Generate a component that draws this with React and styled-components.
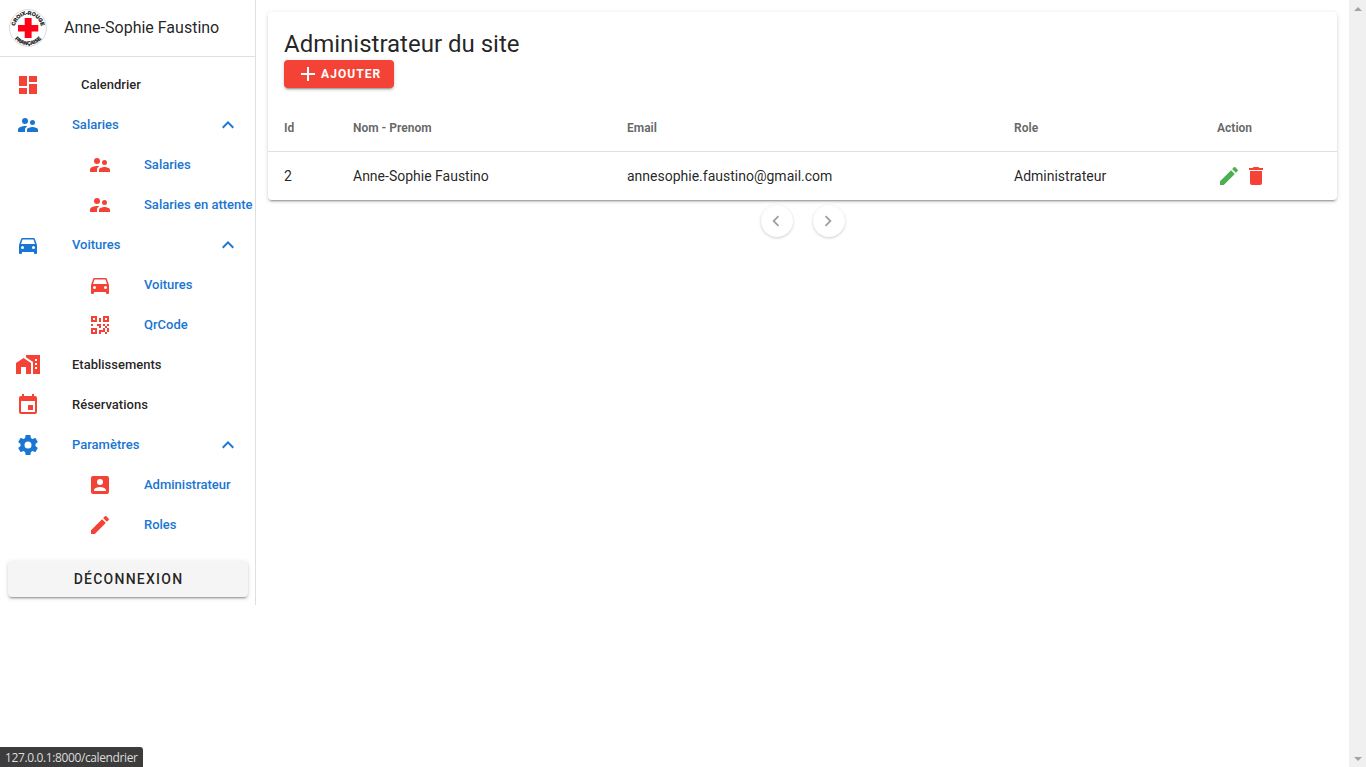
import React from 'react';
import styled, { createGlobalStyle } from 'styled-components';

const RED = '#f44336';
const BLUE = '#1976d2';
const GREEN = '#4caf50';

const icons = {
  dashboard: 'M13,3V9H21V3M13,21H21V11H13M3,21H11V15H3M3,13H11V3H3V13Z',
  people:
    'M16.5,12A2.5,2.5 0 0,0 19,9.5A2.5,2.5 0 0,0 16.5,7A2.5,2.5 0 0,0 14,9.5A2.5,2.5 0 0,0 16.5,12M9,11A3,3 0 0,0 12,8A3,3 0 0,0 9,5A3,3 0 0,0 6,8A3,3 0 0,0 9,11M16.5,14C14.67,14 11,14.92 11,16.75V19H22V16.75C22,14.92 18.33,14 16.5,14M9,13C6.67,13 2,14.17 2,16.5V19H9V16.75C9,15.9 9.33,14.41 11.37,13.28C10.5,13.1 9.66,13 9,13Z',
  car: 'M5,11L6.5,6.5H17.5L19,11M17.5,16A1.5,1.5 0 0,1 16,14.5A1.5,1.5 0 0,1 17.5,13A1.5,1.5 0 0,1 19,14.5A1.5,1.5 0 0,1 17.5,16M6.5,16A1.5,1.5 0 0,1 5,14.5A1.5,1.5 0 0,1 6.5,13A1.5,1.5 0 0,1 8,14.5A1.5,1.5 0 0,1 6.5,16M18.92,6C18.72,5.42 18.16,5 17.5,5H6.5C5.84,5 5.28,5.42 5.08,6L3,12V20A1,1 0 0,0 4,21H5A1,1 0 0,0 6,20V19H18V20A1,1 0 0,0 19,21H20A1,1 0 0,0 21,20V12L18.92,6Z',
  qrcode:
    'M3,11H5V13H3V11M11,5H13V9H11V5M9,11H13V15H11V13H9V11M15,11H17V13H19V11H21V13H19V15H21V19H19V21H17V19H13V21H11V17H15V15H17V13H15V11M19,19V15H17V19H19M15,3H21V9H15V3M17,5V7H19V5H17M3,3H9V9H3V3M5,5V7H7V5H5M3,15H9V21H3V15M5,17V19H7V17H5Z',
  homeCity:
    'M0,21V10L7.5,5L15,10V21H10V14H5V21H0M24,2V21H17V8.93L10,4.27V2H24M21,14H19V16H21V14M21,10H19V12H21V10M21,6H19V8H21V6Z',
  calendar:
    'M19,19H5V8H19M16,1V3H8V1H6V3H5C3.89,3 3,3.89 3,5V19A2,2 0 0,0 5,21H19A2,2 0 0,0 21,19V5C21,3.89 20.1,3 19,3H18V1M17,12H12V17H17V12Z',
  cog: 'M12,15.5A3.5,3.5 0 0,1 8.5,12A3.5,3.5 0 0,1 12,8.5A3.5,3.5 0 0,1 15.5,12A3.5,3.5 0 0,1 12,15.5M19.43,12.97C19.47,12.65 19.5,12.33 19.5,12C19.5,11.67 19.47,11.34 19.43,11L21.54,9.37C21.73,9.22 21.78,8.95 21.66,8.73L19.66,5.27C19.54,5.05 19.27,4.96 19.05,5.05L16.56,6.05C16.04,5.66 15.5,5.32 14.87,5.07L14.5,2.42C14.46,2.18 14.25,2 14,2H10C9.75,2 9.54,2.18 9.5,2.42L9.13,5.07C8.5,5.32 7.96,5.66 7.44,6.05L4.95,5.05C4.73,4.96 4.46,5.05 4.34,5.27L2.34,8.73C2.21,8.95 2.27,9.22 2.46,9.37L4.57,11C4.53,11.34 4.5,11.67 4.5,12C4.5,12.33 4.53,12.65 4.57,12.97L2.46,14.63C2.27,14.78 2.21,15.05 2.34,15.27L4.34,18.73C4.46,18.95 4.73,19.03 4.95,18.95L7.44,17.94C7.96,18.34 8.5,18.68 9.13,18.93L9.5,21.58C9.54,21.82 9.75,22 10,22H14C14.25,22 14.46,21.82 14.5,21.58L14.87,18.93C15.5,18.67 16.04,18.34 16.56,17.94L19.05,18.95C19.27,19.03 19.54,18.95 19.66,18.73L21.66,15.27C21.78,15.05 21.73,14.78 21.54,14.63L19.43,12.97Z',
  accountBox:
    'M6,17C6,15 10,13.9 12,13.9C14,13.9 18,15 18,17V18H6M15,9A3,3 0 0,1 12,12A3,3 0 0,1 9,9A3,3 0 0,1 12,6A3,3 0 0,1 15,9M3,5V19A2,2 0 0,0 5,21H19A2,2 0 0,0 21,19V5A2,2 0 0,0 19,3H5C3.89,3 3,3.9 3,5Z',
  pencil:
    'M20.71,7.04C21.1,6.65 21.1,6 20.71,5.63L18.37,3.29C18,2.9 17.35,2.9 16.96,3.29L15.12,5.12L18.87,8.87M3,17.25V21H6.75L17.81,9.93L14.06,6.18L3,17.25Z',
  trash: 'M19,4H15.5L14.5,3H9.5L8.5,4H5V6H19M6,19A2,2 0 0,0 8,21H16A2,2 0 0,0 18,19V7H6V19Z',
  plus: 'M19,13H13V19H11V13H5V11H11V5H13V11H19V13Z',
  up: 'M7.41,15.41L12,10.83L16.59,15.41L18,14L12,8L6,14L7.41,15.41Z',
  left: 'M15.41,16.58L10.83,12L15.41,7.41L14,6L8,12L14,18L15.41,16.58Z',
  right: 'M8.59,16.58L13.17,12L8.59,7.41L10,6L16,12L10,18L8.59,16.58Z',
};

const GlobalStyle = createGlobalStyle`
  *, *::before, *::after { box-sizing: border-box; }
  body {
    margin: 0;
    overflow: hidden;
    background: #fff;
    color: rgba(0, 0, 0, 0.87);
    font-family: Roboto, "Liberation Sans", sans-serif;
    font-size: 16px;
    line-height: 1.5;
  }
`;

const Svg = styled.svg`
  display: block;
  flex: none;
  width: ${(p) => p.$size}px;
  height: ${(p) => p.$size}px;
  fill: currentColor;
  color: ${(p) => p.$color || 'inherit'};
`;

const Icon = ({ name, size = 24, color, className }) => (
  <Svg viewBox="0 0 24 24" $size={size} $color={color} className={className} aria-hidden="true">
    <path d={icons[name]} />
  </Svg>
);

const Page = styled.div`
  display: flex;
  align-items: flex-start;
  width: 100%;
  height: 767px;
`;

const Sidebar = styled.aside`
  flex: none;
  width: 256px;
  height: 605px;
  border-right: 1px solid #e0e0e0;
`;

const Profile = styled.header`
  display: flex;
  align-items: center;
  height: 57px;
  padding: 0 8px 1px;
  border-bottom: 1px solid #e0e0e0;
`;

const LogoSvg = styled.svg`
  display: block;
  width: 40px;
  height: 40px;
  margin-right: 16px;
`;

const LogoText = styled.text`
  font: 700 5.2px 'Liberation Sans', sans-serif;
  fill: #111;
  stroke: #111;
  stroke-width: 0.25px;
  text-anchor: middle;
`;

const UserName = styled.span`
  line-height: 19px;
  white-space: nowrap;
`;

const NavList = styled.nav`
  padding: 8px 0;
`;

const NavRow = styled.a`
  display: flex;
  align-items: center;
  height: 40px;
  padding-left: ${(p) => (p.$nested ? 88 : 16)}px;
  padding-right: 15px;
  color: ${(p) => (p.$active ? BLUE : 'rgba(0, 0, 0, 0.87)')};
  font-size: 13px;
  font-weight: 500;
  line-height: 13px;
  white-space: nowrap;
`;

const NavLabel = styled.span`
  flex: 1 0 auto;
  margin-left: ${(p) => (p.$inset ? 41 : 32)}px;
  padding-bottom: 1px;
`;

const LogoutArea = styled.div`
  padding: 8px 7px 8px 8px;
`;

const LogoutButton = styled.button`
  display: block;
  width: 100%;
  height: 36px;
  padding: 1px 6px;
  border: 0;
  border-radius: 4px;
  background: #f5f5f5;
  color: rgba(0, 0, 0, 0.87);
  font: 500 14px Roboto, sans-serif;
  letter-spacing: 1.25px;
  text-indent: 1px;
  box-shadow: 0 3px 1px -2px rgba(0, 0, 0, 0.2), 0 2px 2px rgba(0, 0, 0, 0.14), 0 1px 5px rgba(0, 0, 0, 0.12);
`;

const Content = styled.main`
  flex: 1;
  padding: 12px;
`;

const Card = styled.section`
  height: 188px;
  border-radius: 4px;
  background: #fff;
  box-shadow: 0 3px 1px -2px rgba(0, 0, 0, 0.2), 0 2px 2px rgba(0, 0, 0, 0.14), 0 1px 5px rgba(0, 0, 0, 0.12);
`;

const CardHeader = styled.header`
  padding: 16px;
`;

const Title = styled.h1`
  margin: 0;
  font-size: 24px;
  font-weight: 400;
  line-height: 32px;
`;

const AddButton = styled.button`
  display: flex;
  align-items: center;
  gap: 1px;
  width: 110px;
  height: 28px;
  padding: 0 0 0 12px;
  border: 0;
  border-radius: 4px;
  background: ${RED};
  color: #fff;
  font: 700 12px Roboto, sans-serif;
  letter-spacing: 1.07px;
  box-shadow: 0 3px 1px -2px rgba(0, 0, 0, 0.2), 0 2px 2px rgba(0, 0, 0, 0.14), 0 1px 5px rgba(0, 0, 0, 0.12);
`;

const Table = styled.table`
  width: 100%;
  border-spacing: 0;
  table-layout: fixed;
`;

const HeadCell = styled.th`
  width: ${(p) => p.$width}px;
  height: 48px;
  padding: 0 16px;
  border-bottom: 1px solid #e0e0e0;
  color: rgba(0, 0, 0, 0.6);
  font-size: 12px;
  font-weight: 700;
  line-height: 18px;
  text-align: left;
`;

const Cell = styled.td`
  height: 48px;
  padding: 0 16px;
  font-size: 14px;
  line-height: 21px;
  white-space: nowrap;
`;

const Actions = styled.div`
  display: flex;
  gap: 3px;
`;

const Pagination = styled.nav`
  display: flex;
  justify-content: center;
  gap: 20px;
  padding-top: 5px;
`;

const PageButton = styled.button`
  display: flex;
  align-items: center;
  justify-content: center;
  width: 32px;
  height: 32px;
  padding: 0 1px 0 0;
  border: 0;
  border-radius: 50%;
  background: #fff;
  color: #a0a0a0;
  box-shadow: 0 1px 3px rgba(0, 0, 0, 0.2);
`;

const Scrollbar = styled.div`
  display: flex;
  flex: none;
  flex-direction: column;
  align-items: center;
  justify-content: space-between;
  width: 17px;
  height: 767px;
  padding: 7px 0 6px;
  background: #f0f0f0;
`;

const Arrow = styled.span`
  width: 0;
  height: 0;
  border: solid transparent;
  border-width: ${(p) => (p.$down ? '4px 4px 0' : '0 4px 4px')};
  border-color: ${(p) => (p.$down ? '#a3a3a3 transparent transparent' : 'transparent transparent #a3a3a3')};
`;

const StatusTip = styled.div`
  position: absolute;
  left: 0;
  bottom: 0;
  width: 143px;
  height: 20px;
  padding-left: 5px;
  border-radius: 0 3px 0 0;
  background: #3c3c3c;
  color: #dcdcdc;
  font: 12px/21px 'Open Sans', 'Noto Sans', sans-serif;
  letter-spacing: -0.38px;
  white-space: nowrap;
`;

const Logo = () => (
  <LogoSvg viewBox="0 0 40 40" role="img" aria-label="Croix-Rouge française">
    <defs>
      <path id="logo-top" d="M6.8,20 A13.2,13.2 0 0 1 33.2,20" />
      <path id="logo-bottom" d="M3,20 A17,17 0 0 0 37,20" />
    </defs>
    <circle cx="20" cy="20" r="18.4" fill="#fff" stroke="#d0d0d0" strokeWidth="0.8" />
    <LogoText>
      <textPath href="#logo-top" startOffset="50%">CROIX-ROUGE</textPath>
    </LogoText>
    <LogoText>
      <textPath href="#logo-bottom" startOffset="50%">FRANÇAISE</textPath>
    </LogoText>
    <path d="M16.7,10h6.9v6.9h6.7v6.5h-6.7v6.7h-6.9v-6.7h-6.7v-6.5h6.7z" fill="#ff0019" />
  </LogoSvg>
);

const menu = [
  { label: 'Calendrier', icon: 'dashboard', inset: true },
  { label: 'Salaries', icon: 'people', open: true },
  { label: 'Salaries', icon: 'people', nested: true },
  { label: 'Salaries en attente', icon: 'people', nested: true },
  { label: 'Voitures', icon: 'car', open: true },
  { label: 'Voitures', icon: 'car', nested: true },
  { label: 'QrCode', icon: 'qrcode', nested: true },
  { label: 'Etablissements', icon: 'homeCity' },
  { label: 'Réservations', icon: 'calendar' },
  { label: 'Paramètres', icon: 'cog', open: true },
  { label: 'Administrateur', icon: 'accountBox', nested: true },
  { label: 'Roles', icon: 'pencil', nested: true },
];

const columns = [
  ['Id', 69],
  ['Nom - Prenom', 274],
  ['Email', 387],
  ['Role', 203],
  ['Action', 136],
];

export default function App() {
  return (
    <>
      <GlobalStyle />
      <Page>
        <Sidebar>
          <Profile>
            <Logo />
            <UserName>Anne-Sophie Faustino</UserName>
          </Profile>
          <NavList>
            {menu.map((item, i) => (
              <NavRow key={i} $nested={item.nested} $active={item.open || item.nested}>
                <Icon name={item.icon} color={item.open ? BLUE : RED} />
                <NavLabel $inset={item.inset}>{item.label}</NavLabel>
                {item.open && <Icon name="up" />}
              </NavRow>
            ))}
          </NavList>
          <LogoutArea>
            <LogoutButton>DÉCONNEXION</LogoutButton>
          </LogoutArea>
        </Sidebar>
        <Content>
          <Card>
            <CardHeader>
              <Title>Administrateur du site</Title>
              <AddButton>
                <Icon name="plus" />
                AJOUTER
              </AddButton>
            </CardHeader>
            <Table>
              <thead>
                <tr>
                  {columns.map(([label, width]) => (
                    <HeadCell key={label} $width={width}>{label}</HeadCell>
                  ))}
                </tr>
              </thead>
              <tbody>
                <tr>
                  <Cell>2</Cell>
                  <Cell>Anne-Sophie Faustino</Cell>
                  <Cell>annesophie.faustino@gmail.com</Cell>
                  <Cell>Administrateur</Cell>
                  <Cell>
                    <Actions>
                      <Icon name="pencil" color={GREEN} />
                      <Icon name="trash" color={RED} />
                    </Actions>
                  </Cell>
                </tr>
              </tbody>
            </Table>
          </Card>
          <Pagination>
            <PageButton aria-label="Page précédente"><Icon name="left" size={22} /></PageButton>
            <PageButton aria-label="Page suivante"><Icon name="right" size={22} /></PageButton>
          </Pagination>
        </Content>
        <Scrollbar>
          <Arrow />
          <Arrow $down />
        </Scrollbar>
      </Page>
      <StatusTip>127.0.0.1:8000/calendrier</StatusTip>
    </>
  );
}
